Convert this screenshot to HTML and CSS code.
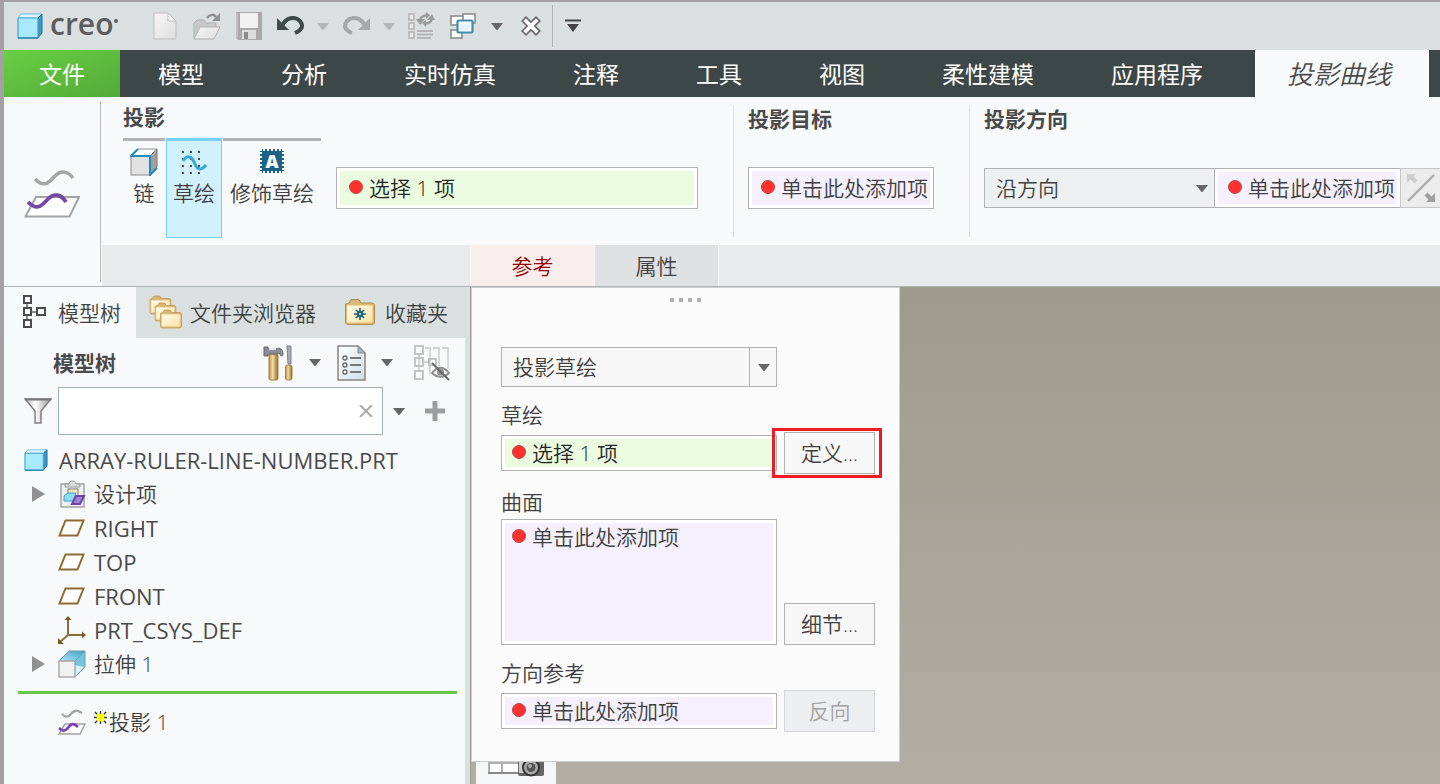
FILE: index.html
```html
<!DOCTYPE html>
<html lang="zh-CN">
<head>
<meta charset="utf-8">
<title>Creo</title>
<link rel="stylesheet" href="styles.css">
</head>
<body>
<svg class="defs" aria-hidden="true">
  <defs>
    <linearGradient id="gold" x1="0" y1="0" x2="1" y2="1"><stop offset="0" stop-color="#fffbe9"/><stop offset="1" stop-color="#ffe3a6"/></linearGradient>
    <linearGradient id="wood" x1="0" y1="0" x2="1" y2="0"><stop offset="0" stop-color="#b88a45"/><stop offset=".4" stop-color="#f8dca0"/><stop offset="1" stop-color="#8f6a30"/></linearGradient>
    <linearGradient id="paper" x1="0" y1="0" x2="1" y2="1"><stop offset="0" stop-color="#fff"/><stop offset="1" stop-color="#cfe0e8"/></linearGradient>
    <linearGradient id="grey" x1="0" y1="0" x2="1" y2="1"><stop offset="0" stop-color="#f7f7f7"/><stop offset="1" stop-color="#dedede"/></linearGradient>
    <linearGradient id="funnel" x1="0" y1="0" x2="1" y2="0"><stop offset="0" stop-color="#b5b5b5"/><stop offset=".4" stop-color="#fff"/><stop offset="1" stop-color="#999"/></linearGradient>
    <linearGradient id="blue" x1="0" y1="1" x2="1" y2="0"><stop offset="0" stop-color="#a9e9ff"/><stop offset="1" stop-color="#3f9fc4"/></linearGradient>
  </defs>
  <symbol id="caret" viewBox="0 0 12 7"><path d="M0 0h12L6.500 7h-1z"/></symbol>
  <symbol id="cube" viewBox="0 0 26 26">
    <path d="M1 5 4 1h21l-4 4z" fill="#dff7ff" stroke="#6db9d8"/>
    <path d="M21 5l4-4v19l-4 5z" fill="#3b97c0" stroke="#1f769d"/>
    <rect x="1" y="5" width="20" height="20" rx="1" fill="#a8ebff" stroke="#4aa3c8" stroke-width="1.200"/>
    <path d="M1 25h20" stroke="#2b86b0" stroke-width="1.500"/>
  </symbol>
  <symbol id="plane" viewBox="0 0 28 18"><path d="M7.500 1.500h18l-6 15H1.500z" fill="#fff" stroke="#8b6c35" stroke-width="2"/></symbol>
  <symbol id="folder" viewBox="0 0 32 28">
    <path d="M1.500 25V6L5 5l2-3.500h8L17 5h12l1.500 2v18l-1.500 1.500H3z" fill="#d8b876" stroke="#b08c4c"/>
    <rect x="2.500" y="7" width="26.500" height="18" rx="1" fill="url(#gold)" stroke="#e0bd78"/>
  </symbol>
  <symbol id="project" viewBox="0 0 56 50">
    <path d="M12 28h43L45.500 47.500H1.500z" fill="#fff" stroke="#a3a3a3" stroke-width="2"/>
    <path d="M11 10c5 5 10 7 15 2l5-5c6-6 13-5 18 2" fill="none" stroke="#a5a5a5" stroke-width="3.400"/>
    <path d="M4 33c5 5 10 7 15 2l5-5c6-6 13-5 18 3" fill="none" stroke="#7348a5" stroke-width="3.800"/>
  </symbol>
  <symbol id="project-small" viewBox="0 0 28 28">
    <path d="M7 16h20l-5 10H1z" fill="#fff" stroke="#a3a3a3" stroke-width="1.500"/>
    <path d="M4 6c3 3 6 4 9 0 3-4 7-4 11-1" fill="none" stroke="#a5a5a5" stroke-width="2.400"/>
    <path d="M1 20c4 4 6 3 9 0 3-5 6-5 10-1" fill="none" stroke="#7b3fc0" stroke-width="2.600"/>
  </symbol>
</svg>

<div class="app">
  <header class="titlebar">
    <div class="brand">
      <svg class="brand-cube"><use href="#cube"/></svg>
      <span class="brand-name">creo</span><span class="brand-dot"></span>
    </div>
    <div class="quick" role="toolbar" aria-label="快速访问工具栏">
      <button class="tool" aria-label="新建"><svg width="24" height="28" viewBox="0 0 24 28"><path d="M1 1h14l8 8v18H1z" fill="url(#grey)" stroke="#bdbdbd"/><path d="M15 1v8h8z" fill="#fafafa" stroke="#bdbdbd"/></svg></button>
      <button class="tool" aria-label="打开"><svg width="28" height="28" viewBox="0 0 28 28"><path d="M1 26V11l3-3h7l2 3h10v5" fill="#c8c8c8" stroke="#b0b0b0"/><path d="M7 15h20l-6 12H1z" fill="url(#grey)" stroke="#b0b0b0"/><path d="M14 6c3-4 7-4 9-1" fill="none" stroke="#8f8f8f" stroke-width="2.500"/><path d="M27 1v8h-8z" fill="#8f8f8f"/></svg></button>
      <button class="tool" aria-label="保存"><svg width="26" height="28" viewBox="0 0 26 28"><path d="M0 0h26v28H2l-2-2z" fill="#a9a9a9"/><rect x="4" y="1" width="18" height="15" fill="#f1f1f1"/><rect x="6" y="18" width="14" height="9" fill="#ddd"/><rect x="8" y="20" width="4" height="7" fill="#8c8c8c"/><path d="M1 1v25" stroke="#d6d6d6"/></svg></button>
      <button class="tool" aria-label="撤消"><svg width="28" height="20" viewBox="0 0 28 20"><path d="M5 10C9 1 18 0 23 5c4 5 2 9-5 12" fill="none" stroke="#3f4949" stroke-width="4"/><path d="M0 2v12h12z" fill="#3f4949"/></svg></button>
      <button class="tool narrow off" aria-label="撤消列表"><svg class="caret"><use href="#caret"/></svg></button>
      <button class="tool wide" aria-label="重做"><svg width="28" height="20" viewBox="0 0 28 20"><path d="M23 10C19 1 10 0 5 5c-4 5-2 9 5 12" fill="none" stroke="#a4a8a8" stroke-width="4"/><path d="M28 2v12H16z" fill="#a4a8a8"/></svg></button>
      <button class="tool narrow off" aria-label="重做列表"><svg class="caret"><use href="#caret"/></svg></button>
      <button class="tool" aria-label="重新生成"><svg width="28" height="28" viewBox="0 0 28 28"><g fill="#e8eaea" stroke="#b4b4b4" stroke-width="1.600"><rect x="2" y="2" width="5" height="6"/><rect x="2" y="11" width="5" height="6"/><rect x="2" y="20" width="5" height="6"/></g><path d="M10 19h16M10 22.500h16M10 26h14" stroke="#b4b4b4" stroke-width="2"/><path d="M13 8c1-4 5-5 8-4M25 7c-1 4-5 5-8 4" fill="none" stroke="#9a9a9a" stroke-width="2.500"/><path d="M9 7h9l-5 6zM20 8h8l-3-6zM19 0v7l4-4zM19 8v7l-4-4z" fill="#9a9a9a"/></svg></button>
      <button class="tool" aria-label="窗口"><svg width="28" height="28" viewBox="0 0 28 28"><g fill="#fff" stroke="#8b8b8b" stroke-width="1.600"><rect x="2" y="4" width="13" height="9"/><rect x="14" y="2" width="12" height="9"/><rect x="2" y="18" width="11" height="8"/></g><rect x="8.500" y="8.500" width="15" height="12" rx="1" fill="#fff" stroke="#3d8cb3" stroke-width="2.200"/><rect x="11" y="12" width="10" height="6" fill="#e4f3fa"/></svg></button>
      <button class="tool mid" aria-label="窗口列表"><svg class="caret"><use href="#caret"/></svg></button>
      <button class="tool" aria-label="关闭"><svg width="22" height="20" viewBox="0 0 22 20"><g stroke-linecap="square"><path d="M6 5l10 10M16 5L6 15" stroke="#666" stroke-width="7"/><path d="M6 5l10 10M16 5L6 15" stroke="#fff" stroke-width="3.800"/></g></svg></button>
      <button class="tool last" aria-label="自定义"><svg width="16" height="14" viewBox="0 0 16 14"><path d="M0 1.500h16" stroke="#444" stroke-width="2"/><path d="M2 5h12L8 13z" fill="#444"/></svg></button>
    </div>
  </header>

  <nav class="menu">
    <a class="menu-file" href="#">文件</a>
    <a class="menu-item" href="#">模型</a>
    <a class="menu-item" href="#">分析</a>
    <a class="menu-item" href="#">实时仿真</a>
    <a class="menu-item" href="#">注释</a>
    <a class="menu-item" href="#">工具</a>
    <a class="menu-item" href="#">视图</a>
    <a class="menu-item" href="#">柔性建模</a>
    <a class="menu-item" href="#">应用程序</a>
    <a class="menu-active" href="#" aria-current="page">投影曲线</a>
  </nav>

  <section class="ribbon">
    <div class="feature"><svg class="feature-icon"><use href="#project"/></svg></div>
    <div class="dash">
      <div class="groups">
        <div class="group grow">
          <h2 class="group-title">投影</h2>
          <div class="group-row">
            <div class="modes">
              <button class="mode"><svg width="28" height="28" viewBox="0 0 28 28"><path d="M1 8 8 1h19l-7 7z" fill="#fff" stroke="#8c8c8c"/><path d="M20 8l7-7v18l-7 8z" fill="#a0a0a0" stroke="#7d7d7d"/><rect x="1" y="8" width="19" height="19" fill="#e2e2e2" stroke="#8c8c8c"/><path d="M8 1 1 8h19v19l7-7" fill="none" stroke="#1f8cbd" stroke-width="2"/></svg><span>链</span></button>
              <button class="mode on" aria-pressed="true"><svg width="28" height="28" viewBox="0 0 28 28"><g stroke="#4c4c4c" stroke-width="2" stroke-dasharray="2 6"><path d="M2 4h24M2 11h24M2 18h24M2 25h24"/></g><path d="M3 13c3-5 7-6 10-1l3 6c3 5 7 3 10-1" fill="none" stroke="#36a9dc" stroke-width="3"/></svg><span>草绘</span></button>
              <button class="mode"><span class="stamp">A</span><span>修饰草绘</span></button>
            </div>
            <label class="collector green inset"><span class="dot"></span><input value="选择 1 项" aria-label="草绘" readonly></label>
          </div>
        </div>
        <div class="group ruled target">
          <h2 class="group-title">投影目标</h2>
          <div class="group-row"><label class="collector violet"><span class="dot"></span><input value="单击此处添加项" aria-label="投影目标" readonly></label></div>
        </div>
        <div class="group ruled direction">
          <h2 class="group-title">投影方向</h2>
          <div class="group-row joined">
            <div class="dropdown flat"><select aria-label="投影方向"><option>沿方向</option></select><svg class="caret"><use href="#caret"/></svg></div>
            <label class="collector violet mid-cell"><span class="dot"></span><input value="单击此处添加项" aria-label="方向参考" readonly></label>
            <button class="flip" aria-label="反向"><svg width="28" height="28" viewBox="0 0 28 28"><path d="M1 27 27 1" stroke="#ababab" stroke-width="2.400"/><path d="M0 0h9L6.500 2.500l4 4-3 3-4-4L0 9z" fill="#cfcfcf"/><path d="M28 28h-9l2.500-2.500-4-4 3-3 4 4L28 19z" fill="#a0a0a0"/></svg></button>
          </div>
        </div>
      </div>
      <div class="subtabs"><button class="subtab current">参考</button><button class="subtab">属性</button></div>
    </div>
  </section>

  <main class="work">
    <aside class="side">
      <div class="side-tabs">
        <button class="side-tab tree-tab"><svg width="24" height="34" viewBox="0 0 24 34"><g fill="#fff" stroke="#4a4a4a" stroke-width="2"><path d="M5 9v16M9 17h6" stroke="#8a8a8a"/><rect x="2" y="1" width="7" height="7"/><rect x="2" y="13" width="7" height="7"/><rect x="2" y="25" width="7" height="7"/><rect x="15" y="13" width="8" height="7"/></g></svg>模型树</button>
        <button class="side-tab browse-tab"><svg width="34" height="34" viewBox="0 0 34 34"><use href="#folder" x="0" y="0" width="23" height="20"/><use href="#folder" x="5" y="7" width="23" height="20"/><use href="#folder" x="10" y="14" width="24" height="20"/></svg>文件夹浏览器</button>
        <button class="side-tab fav-tab"><svg width="32" height="28" viewBox="0 0 32 28"><use href="#folder" width="32" height="28"/><path d="M16 10v12M10 16h12M12 12l8 8M20 12l-8 8" stroke="#175e7d" stroke-width="1.600"/><circle cx="16" cy="16" r="3" fill="#175e7d"/><circle cx="16" cy="16" r="1" fill="#fff"/></svg>收藏夹</button>
      </div>
      <div class="side-panel">
        <div class="side-head">
          <h2 class="side-title">模型树</h2>
          <button class="tool hammer" aria-label="设置"><svg width="30" height="36" viewBox="0 0 30 36"><rect x="6" y="9" width="9" height="26" rx="1.500" fill="url(#wood)" stroke="#a8803f"/><path d="M1 2h4v2h8c4-2 7 0 7 6l-2 1c-1-3-3-3-6-2H5v2H1z" fill="#8d8d98" stroke="#66666f"/><path d="M6 4h7" stroke="#e6e6ec" stroke-width="2"/><path d="M24 1h4v18h-3z" fill="#a9a9b5" stroke="#80808a"/><rect x="22.500" y="20" width="6.500" height="15" rx="2" fill="url(#wood)" stroke="#a8803f"/></svg></button>
          <button class="tool mid" aria-label="设置列表"><svg class="caret"><use href="#caret"/></svg></button>
          <button class="tool doc" aria-label="显示"><svg width="29" height="36" viewBox="0 0 29 36"><path d="M1 1h20l7 7v27H1z" fill="url(#paper)" stroke="#858585" stroke-width="1.500"/><path d="M21 1v7h7z" fill="#9fb9c6" stroke="#858585"/><g fill="#fff" stroke="#666" stroke-width="1.300"><circle cx="8" cy="13" r="2"/><circle cx="8" cy="20" r="2"/><circle cx="8" cy="27" r="2"/></g><path d="M13 13h11M13 20h11M13 27h11" stroke="#777" stroke-width="2"/></svg></button>
          <button class="tool mid" aria-label="显示列表"><svg class="caret"><use href="#caret"/></svg></button>
          <button class="tool hide" aria-label="隐藏列"><svg width="36" height="36" viewBox="0 0 36 36"><g fill="none" stroke="#bfbfbf" stroke-width="1.800"><path d="M5 9v18M8 17h8M11 3h5v26M19 3h6v18M28 3h6v20" stroke="#d3d3d3"/><rect x="1" y="1" width="8" height="8"/><rect x="1" y="13" width="8" height="8"/><rect x="1" y="26" width="8" height="8"/><rect x="15" y="14" width="7" height="6"/></g><path d="M18 28c5-7 12-7 17 0-5 5-12 5-17 0z" fill="#eee" stroke="#8e8e8e" stroke-width="1.800"/><circle cx="26.500" cy="27" r="3.500" fill="#929292"/><path d="M18 18l17 17" stroke="#666" stroke-width="1.800"/></svg></button>
        </div>
        <div class="search">
          <svg width="28" height="26" viewBox="0 0 28 26"><path d="M1 1h26L17 13v12h-6V13z" fill="url(#funnel)" stroke="#808080" stroke-width="1.500"/><path d="M1 1.500h26" stroke="#777" stroke-width="2"/></svg>
          <div class="search-box"><input type="text" aria-label="搜索"><button class="clear" aria-label="清除"><svg width="14" height="12" viewBox="0 0 14 12"><path d="M1 0l12 12M13 0L1 12" stroke="#aaa" stroke-width="2"/></svg></button></div>
          <button class="tool search-list" aria-label="搜索列表"><svg class="caret"><use href="#caret"/></svg></button>
          <button class="tool plus" aria-label="添加"><svg width="20" height="20" viewBox="0 0 20 20"><path d="M10 0v20M0 10h20" stroke="#9b9e9e" stroke-width="5"/></svg></button>
        </div>
        <ul class="tree">
          <li class="node root latin"><svg width="24" height="22" viewBox="0 0 26 26" preserveAspectRatio="none"><use href="#cube"/></svg><span>ARRAY-RULER-LINE-NUMBER.PRT</span></li>
          <li class="node"><svg class="twist" viewBox="0 0 13 16"><path d="M0 0l13 8-13 8z"/></svg><svg class="node-icon" viewBox="0 0 28 28"><rect x="3" y="4" width="23" height="23" fill="#eef0f1" stroke="#a2a2a2" stroke-width="1.500"/><path d="M7 7V4h4c0-4 7-4 7 0h4v3z" fill="#ddd" stroke="#999"/><rect x="10" y="9" width="10" height="8" fill="#ffe9bb" stroke="#777"/><path d="M6 16l4-3h8l-3 8H6z" fill="#8fdcf5" stroke="#38a0c5"/><path d="M14 24l4-8h8l-4 8z" fill="#a184d2" stroke="#7042ae" stroke-width="2"/></svg><span>设计项</span></li>
          <li class="node latin"><i class="twist"></i><svg class="node-icon"><use href="#plane"/></svg><span>RIGHT</span></li>
          <li class="node latin"><i class="twist"></i><svg class="node-icon"><use href="#plane"/></svg><span>TOP</span></li>
          <li class="node latin"><i class="twist"></i><svg class="node-icon"><use href="#plane"/></svg><span>FRONT</span></li>
          <li class="node latin"><i class="twist"></i><svg class="node-icon" viewBox="0 0 28 28"><path d="M10 2v17h16M10 19l-8 7" fill="none" stroke="#8b6c35" stroke-width="2"/><path d="M10 0l3.500 4h-7zM28 19l-4 3.500v-7zM0 28v-6l6 6z" fill="#7b5c28"/></svg><span>PRT_CSYS_DEF</span></li>
          <li class="node"><svg class="twist" viewBox="0 0 13 16"><path d="M0 0l13 8-13 8z"/></svg><svg class="node-icon" viewBox="0 0 28 28"><path d="M1 11 11 1h16L17 11z" fill="url(#blue)" stroke="#719cae"/><path d="M17 11 27 1v16L17 27z" fill="#72c5e2" stroke="#719cae"/><path d="M17 27V15l9 2z" fill="#d7f4fc"/><rect x="1" y="11" width="16" height="16" fill="#f1f1f1" stroke="#a9a9a9" stroke-width="1.500"/></svg><span>拉伸 1</span></li>
        </ul>
        <div class="insert-line"></div>
        <ul class="tree">
          <li class="node"><i class="twist"></i><svg class="node-icon"><use href="#project-small"/></svg><svg class="spark" viewBox="0 0 14 14"><path d="M7 0v14M0 7h14M1 1l12 12M13 1L1 13" stroke="#333" stroke-width="1.500"/><rect x="3" y="3" width="8" height="8" fill="#ff0"/></svg><span>投影 1</span></li>
        </ul>
      </div>
    </aside>

    <div class="canvas">
      <div class="view-bar"><svg width="58" height="34" viewBox="0 0 58 34"><rect x="1" y="1" width="36" height="28" fill="#fff" stroke="#b0b0b0" stroke-width="2"/><path d="M1 19h36M14 1v28" stroke="#b0b0b0" stroke-width="2"/><path d="M0 29h36" stroke="#888" stroke-width="2"/><rect x="30" y="15" width="26" height="17" rx="2" fill="#666"/><path d="M31 17h5v12h-5z" fill="#ccc"/><circle cx="43" cy="23.500" r="8" fill="#aaa" stroke="#333" stroke-width="2"/><circle cx="43" cy="23.500" r="4.500" fill="#555"/><circle cx="42" cy="22" r="2" fill="#aaa"/></svg></div>
      <form class="panel">
        <div class="grip"><i></i><i></i><i></i><i></i></div>
        <div class="dropdown split"><select aria-label="类型"><option>投影草绘</option></select><svg class="caret"><use href="#caret"/></svg></div>
        <label class="caption" for="sketch">草绘</label>
        <div class="field-row">
          <div class="collector green slim"><span class="dot"></span><input id="sketch" value="选择 1 项" readonly></div>
          <div class="marked"><button type="button" class="push">定义...</button></div>
        </div>
        <label class="caption" for="surfaces">曲面</label>
        <div class="field-row bottom">
          <div class="collector violet tall"><span class="dot"></span><textarea id="surfaces" readonly>单击此处添加项</textarea></div>
          <button type="button" class="push">细节...</button>
        </div>
        <label class="caption" for="dirref">方向参考</label>
        <div class="field-row">
          <div class="collector violet slim"><span class="dot"></span><input id="dirref" value="单击此处添加项" readonly></div>
          <button type="button" class="push" disabled>反向</button>
        </div>
      </form>
    </div>
  </main>
</div>
</body>
</html>
```
FILE: styles.css
```css
* { box-sizing: border-box; }
body {
  margin: 0;
  font-family: "Open Sans", "Noto Sans CJK SC", sans-serif;
  font-size: 21px;
  font-weight: 350;
  color: #404040;
}
button, input, select, textarea { font: inherit; color: inherit; }
button { margin: 0; padding: 0; border: 0; background: none; white-space: nowrap; }
input, textarea { min-width: 0; padding: 0; border: 0; background: none; outline: 0; }
h2 { margin: 0; font-size: 21px; font-weight: 700; color: #4a4a4a; }
ul { margin: 0; padding: 0; list-style: none; }
svg { display: block; flex: none; }
.defs { position: absolute; width: 0; height: 0; }

.app {
  display: flex;
  flex-direction: column;
  min-height: 100vh;
  overflow: hidden;
  border-left: 4px solid #a3a1a1;
  border-top: 2px solid #a3a1a1;
  background: #f8f9fb;
}

.titlebar { display: flex; height: 48px; background: #dae0df; }
.brand { display: flex; align-items: center; width: 140px; padding-left: 13px; }
.brand-cube { width: 26px; height: 26px; }
.brand-name { margin-left: 7px; padding-bottom: 4px; font-size: 30px; line-height: 44px; font-weight: 600; color: #5c5c5c; }
.brand-dot { width: 4px; height: 4px; margin: 0 0 10px 1px; border-radius: 2px; background: #5c5c5c; }
.quick { display: flex; align-items: center; }
.tool { display: flex; align-items: center; justify-content: center; width: 42px; height: 42px; }
.tool.narrow { width: 22px; }
.tool.mid { width: 26px; }
.tool.wide { width: 44px; }
.tool.last { width: 41px; border-left: 1px solid #b0b5b5; }
.caret { width: 12px; height: 7px; fill: #666; }
.off .caret { fill: #b3b6b6; }

.menu { display: flex; height: 47px; background: #3e4747; font-size: 23px; line-height: 48px; white-space: nowrap; }
.menu a { color: #fff; text-decoration: none; font-weight: 400; }
.menu .menu-file { width: 116px; text-align: center; background: linear-gradient(160deg, #68d044, #53a937); }
.menu-item { margin-right: 1px; padding: 0 38px; }
.menu .menu-active { margin-left: 13px; width: 174px; padding-right: 6px; background: #f8f9fb; color: #4a4a4a; font-size: 26px; font-style: italic; font-weight: 350; text-align: center; }

.ribbon { display: flex; border-bottom: 1px solid #b0b3b3; }
.feature { display: flex; align-items: center; justify-content: center; width: 97px; margin: 4px 0; padding-top: 4px; border-right: 1px solid #b7bfc2; }
.feature-icon { width: 56px; height: 50px; }
.dash { flex: 1; min-width: 0; padding-left: 1px; }
.groups { display: flex; height: 148px; overflow: hidden; }
.group { padding-left: 21px; }
.grow { flex: 1; }
.ruled { padding-left: 14px; border-left: 1px solid #dfe2e5; margin-top: 8px; margin-bottom: 8px; }
.ruled .group-title { line-height: 28px; padding-bottom: 5px; }
.group-title { line-height: 41px; }
.group-row { display: flex; align-items: center; height: 100px; }
.target { width: 236px; padding-right: 35px; }
.direction { width: 471px; }
.modes { display: flex; gap: 1px; height: 100px; }
.mode { display: flex; flex-direction: column; align-items: center; padding: 7px 7px 0; border-top: 3px solid #b2b2b2; }
.mode span { line-height: 34px; }
.mode:first-child { width: 42px; }
.mode.on { padding: 7px 6px 0; border: 1px solid #75d0fb; border-top-width: 3px; background: #d2f1fe; }
.mode .stamp { width: 24px; height: 24px; margin: 1px 0 3px; border: 2px dotted #f8f9fb; background: #1d6388; color: #fff; font-size: 18px; font-weight: 800; line-height: 20px; text-align: center; }

.collector { display: flex; align-items: center; height: 42px; padding: 0 8px; border: 1px solid #b2b2b2; box-shadow: inset 0 0 0 3px #fff; }
.collector input { flex: 1; width: 100%; height: 30px; padding-bottom: 2px; }
.green { background: #eafbdf; color: #262626; }
.violet { background: #f5f0fe; }
.inset { width: 362px; margin-left: 15px; padding-left: 12px; }
.target .collector { width: 186px; padding: 0 3px 0 12px; }
.dot { flex: none; width: 14px; height: 14px; margin: 0 6px 3px 0; border: 1px solid #b84a40; border-radius: 7px; background: #ff3030; }
.joined > * { height: 40px; }
.mid-cell { width: 185px; padding: 0 3px 0 12px; border-left: 0; border-right: 0; }
.mid-cell .dot { margin-left: 1px; }
.flip { display: flex; align-items: center; justify-content: center; width: 40px; border: 1px solid #c6c6c6; border-right: 0; background: #ececec; }

.dropdown { display: grid; align-items: center; height: 40px; }
.dropdown select { grid-area: 1 / 1; width: 100%; height: 100%; padding: 0 11px; border: 1px solid #b2b2b2; border-radius: 0; appearance: none; background: #f7f7f7; }
.dropdown .caret { grid-area: 1 / 1; justify-self: end; margin-right: 7px; pointer-events: none; }
.flat { width: 231px; }
.flat select { background: #edf0f1; }
.split { width: 276px; }
.split select { background: linear-gradient(90deg, transparent 247px, #b2b2b2 247px, #b2b2b2 248px, transparent 248px) #f7f7f7; }

.subtabs { display: flex; gap: 1px; height: 41px; padding-left: 369px; background: #e9eaec; }
.subtab { width: 123px; padding-bottom: 2px; background: #dfe0e2; box-shadow: 1px 0 #f8f9fb; }
.subtab.current { background: #faeeed; color: #960000; box-shadow: 1px 0 #f8f9fb, -1px 0 #f8f9fb; }

.work { display: flex; flex: 1; }
.side { display: flex; flex-direction: column; width: 467px; border-right: 1px solid #9d9b91; background: #dae0df; }
.side-tabs { display: flex; height: 51px; }
.side-tab { display: flex; align-items: center; padding-bottom: 2px; color: #3c4343; }
.tree-tab { width: 132px; padding-left: 18px; gap: 12px; background: #f8f9fb; color: #404040; }
.browse-tab { padding-left: 13px; gap: 7px; }
.fav-tab { padding-left: 28px; gap: 9px; }
.side-panel { flex: 1; margin-right: 5px; background: linear-gradient(90deg, #f5faf9, #f8f9fb 60px); }
.side-head { display: flex; align-items: center; height: 49px; padding-left: 49px; }
.side-title { flex: 1; padding-bottom: 2px; }
.hammer { width: 48px; }
.doc { width: 46px; }
.hide { width: 36px; margin: 0 15px 0 14px; }
.search { display: flex; align-items: center; padding-left: 20px; }
.search-box { display: flex; align-items: center; flex: 1; height: 48px; margin-left: 6px; padding: 0 9px; border: 1px solid #9fb0b0; background: #fff; }
.search-box input { flex: 1; }
.search-list { width: 32px; }
.plus { width: 20px; margin: 0 20px 0 10px; }
.tree { padding-top: 8px; }
.node { display: flex; align-items: center; height: 34px; padding-left: 28px; line-height: 32px; white-space: nowrap; }
.latin { font-size: 22px; font-weight: 400; color: #4a4a4a; }
.root { padding-left: 20px; gap: 11px; }
.twist { width: 13px; height: 16px; margin-right: 13px; fill: #919191; flex: none; }
.node-icon { width: 28px; height: 28px; margin-right: 8px; }
.spark { width: 13px; height: 13px; margin: 0 2px 10px 0; }
.insert-line { height: 3px; margin: 10px 8px 3px 14px; background: #65c847; }

.canvas { position: relative; flex: 1; overflow: hidden; background: linear-gradient(#9d9b8e, #b1afa3); }
.view-bar { position: absolute; left: 5px; bottom: 0; width: 80px; padding: 0 0 6px 12px; background: #f5f6f8; }
.panel { position: absolute; top: 0; left: 0; width: 429px; padding: 10px 24px 29px 29px; border: 1px solid #ccd0d0; background: #fbfbfb; }
.grip { display: flex; justify-content: center; gap: 5px; margin-bottom: 45px; padding-right: 5px; }
.grip i { width: 4px; height: 4px; background: #b0b0b0; }
.caption { display: block; padding: 13px 0 2px; line-height: 30px; }
.field-row { display: flex; align-items: center; gap: 7px; }
.field-row.bottom { align-items: flex-end; }
.panel .collector { width: 276px; padding-left: 10px; }
.panel .slim { height: 36px; }
.panel .tall { align-items: flex-start; height: 126px; padding-top: 3px; }
.tall .dot { margin-top: 6px; }
.tall textarea { flex: 1; height: 110px; line-height: 28px; resize: none; overflow: hidden; }
.push { display: block; width: 91px; height: 42px; padding-bottom: 2px; border: 1px solid #b2b2b2; background: #f7f7f7; }
.push:disabled { border-color: #d2d5d7; background: #edeeef; color: #a3a3a3; }
.marked { position: relative; }
.marked::after { content: ""; position: absolute; inset: -4px -7px -4px -12px; border: 3px solid #ed1c24; pointer-events: none; }
```
